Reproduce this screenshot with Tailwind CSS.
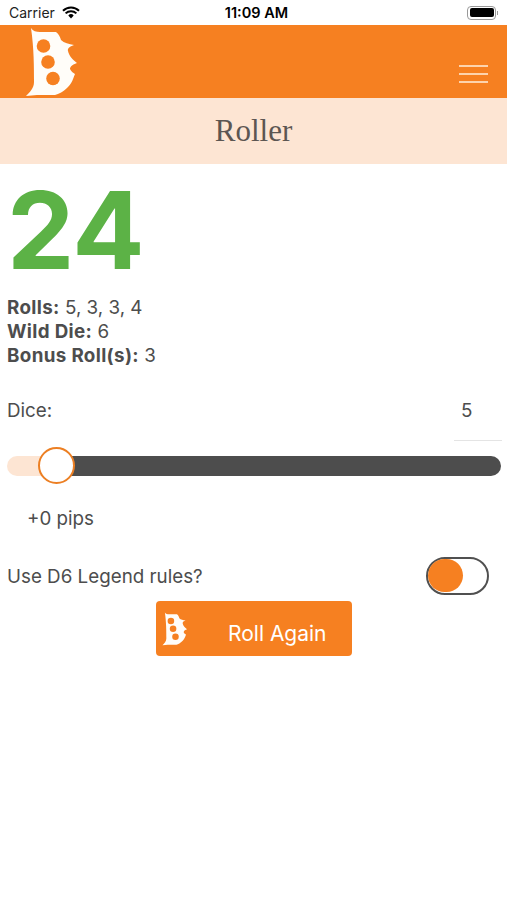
<!DOCTYPE html>
<html lang="en">
<head>
  <meta charset="UTF-8" />
  <meta name="viewport" content="width=device-width, initial-scale=1.0"/>
  <title>Roller</title>
  <script src="https://cdn.jsdelivr.net/npm/@tailwindcss/browser@4"></script>
</head>
<body class="bg-white font-['Inter',sans-serif] text-[#4d4d4d]">
  <div class="relative w-[507px] h-[900px] overflow-hidden">
    <!-- status bar -->
    <div class="h-[25px] flex items-center justify-between pl-[9px] pr-[9px] text-black">
      <div class="flex items-center gap-[7px] text-[14px] text-[#222]">
        <span>Carrier</span>
        <svg width="18" height="13" viewBox="0 0 18 13"><path d="M9 12.500 6.300 9.400a3.900 3.900 0 0 1 5.400 0Z" fill="#000"/><path d="M1 4.800a11.500 11.500 0 0 1 16 0M3.600 7.400a7.800 7.800 0 0 1 10.800 0" fill="none" stroke="#000" stroke-width="2"/></svg>
      </div>
      <div class="absolute left-[6px] right-0 text-center text-[14.5px] font-semibold pointer-events-none">11:09 AM</div>
      <div class="flex items-center">
        <div class="w-[29px] h-[14px] rounded-[4px] border border-[#999] p-[1.5px]"><div class="h-full rounded-[2px] bg-black"></div></div>
        <div class="w-[1px] h-[4px] bg-[#999] ml-[1px]"></div>
      </div>
    </div>

    <!-- header -->
    <div class="h-[73px] bg-[#f68021] flex justify-between pl-[25px] pr-[19px]">
      <svg class="mt-[3px]" width="54" height="69" viewBox="0 0 54 69">
        <path d="M6 0 C8 3 11 4 15 4 L31 4 C34 6 35 9 36 12 C39 15 44 16 49 17 C46 18 42 20 43 23 C44 28 48 32 52 35 C49 36 45 38 45 41 C46 43 48 45 50 46 C48 51 47 55 43 59 C38 64 34 66 30 67 L12 67 L1 68 C5 64 9 60 9 54 C9 40 9 20 6 0 Z" fill="#fffdf9"/>
        <circle cx="18.500" cy="18" r="6.800" fill="#f68021"/>
        <circle cx="23" cy="34" r="6.800" fill="#f68021"/>
        <circle cx="28" cy="50.500" r="6.800" fill="#f68021"/>
      </svg>
      <div class="w-[29px] mt-[40px] flex flex-col gap-[6px]">
        <div class="h-[2px] bg-[#fdd3ad]"></div>
        <div class="h-[2px] bg-[#fdd3ad]"></div>
        <div class="h-[2px] bg-[#fdd3ad]"></div>
      </div>
    </div>

    <!-- title -->
    <div class="h-[66px] bg-[#fde5d3] flex items-center justify-center">
      <h1 class="font-['Liberation_Serif',serif] text-[31px] text-[#5c5652]">Roller</h1>
    </div>

    <!-- result -->
    <div class="px-[7px]">
      <div class="mt-[6px] h-[120px] font-bold text-[107px] leading-[120px] tracking-[-0.5px] text-[#5cb246]">24</div>
      <div class="mt-[6px] text-[18.8px] leading-[24px]">
        <div><b class="font-bold tracking-[0.35px]">Rolls:</b> 5, 3, 3, 4</div>
        <div><b class="font-bold tracking-[0.35px]">Wild Die:</b> 6</div>
        <div><b class="font-bold tracking-[0.35px]">Bonus Roll(s):</b> 3</div>
      </div>

      <div class="mt-[21px] flex justify-between items-start text-[18.8px]">
        <div class="mt-[8px]">Dice:</div>
        <div class="w-[48px] h-[52px] mr-[-2px] pt-[8px] pl-[7px] border-b border-[#e4e4e4]">5</div>
      </div>
    </div>

    <!-- slider -->
    <div class="mt-[15px] ml-[7px] w-[494px] h-[20px] flex">
      <div class="w-[49px] h-full rounded-l-full bg-[#fde5d3]"></div>
      <div class="flex-1 h-full rounded-r-full bg-[#4d4d4d]"></div>
    </div>
    <div class="absolute left-[38px] top-[447px] w-[37px] h-[37px] rounded-full bg-white border-2 border-[#ec7f23]"></div>

    <div class="mt-[31px] ml-[27px] text-[18.8px] leading-[24px]">+0 pips</div>

    <div class="mt-[26px] pl-[7px] pr-[18px] flex items-center justify-between text-[18.8px]">
      <span class="pt-[2px]">Use D6 Legend rules?</span>
      <div class="w-[63px] h-[38px] rounded-full border-[2.5px] border-[#505050] bg-white">
        <div class="w-[35px] h-[33px] rounded-full bg-[#f68021]"></div>
      </div>
    </div>

    <button class="mt-[6px] ml-[156px] w-[196px] h-[55px] rounded-[4px] bg-[#f68021] text-white text-[21px] flex items-center pl-[6px]">
      <svg width="26" height="36" viewBox="0 0 54 69">
        <path d="M6 0 C8 3 11 4 15 4 L31 4 C34 6 35 9 36 12 C39 15 44 16 49 17 C46 18 42 20 43 23 C44 28 48 32 52 35 C49 36 45 38 45 41 C46 43 48 45 50 46 C48 51 47 55 43 59 C38 64 34 66 30 67 L12 67 L1 68 C5 64 9 60 9 54 C9 40 9 20 6 0 Z" fill="#fffdf9"/>
        <circle cx="18.500" cy="18" r="6.800" fill="#f68021"/>
        <circle cx="23" cy="34" r="6.800" fill="#f68021"/>
        <circle cx="28" cy="50.500" r="6.800" fill="#f68021"/>
      </svg>
      <span class="ml-[40px] mt-[10px]">Roll Again</span>
    </button>
  </div>
</body>
</html>
